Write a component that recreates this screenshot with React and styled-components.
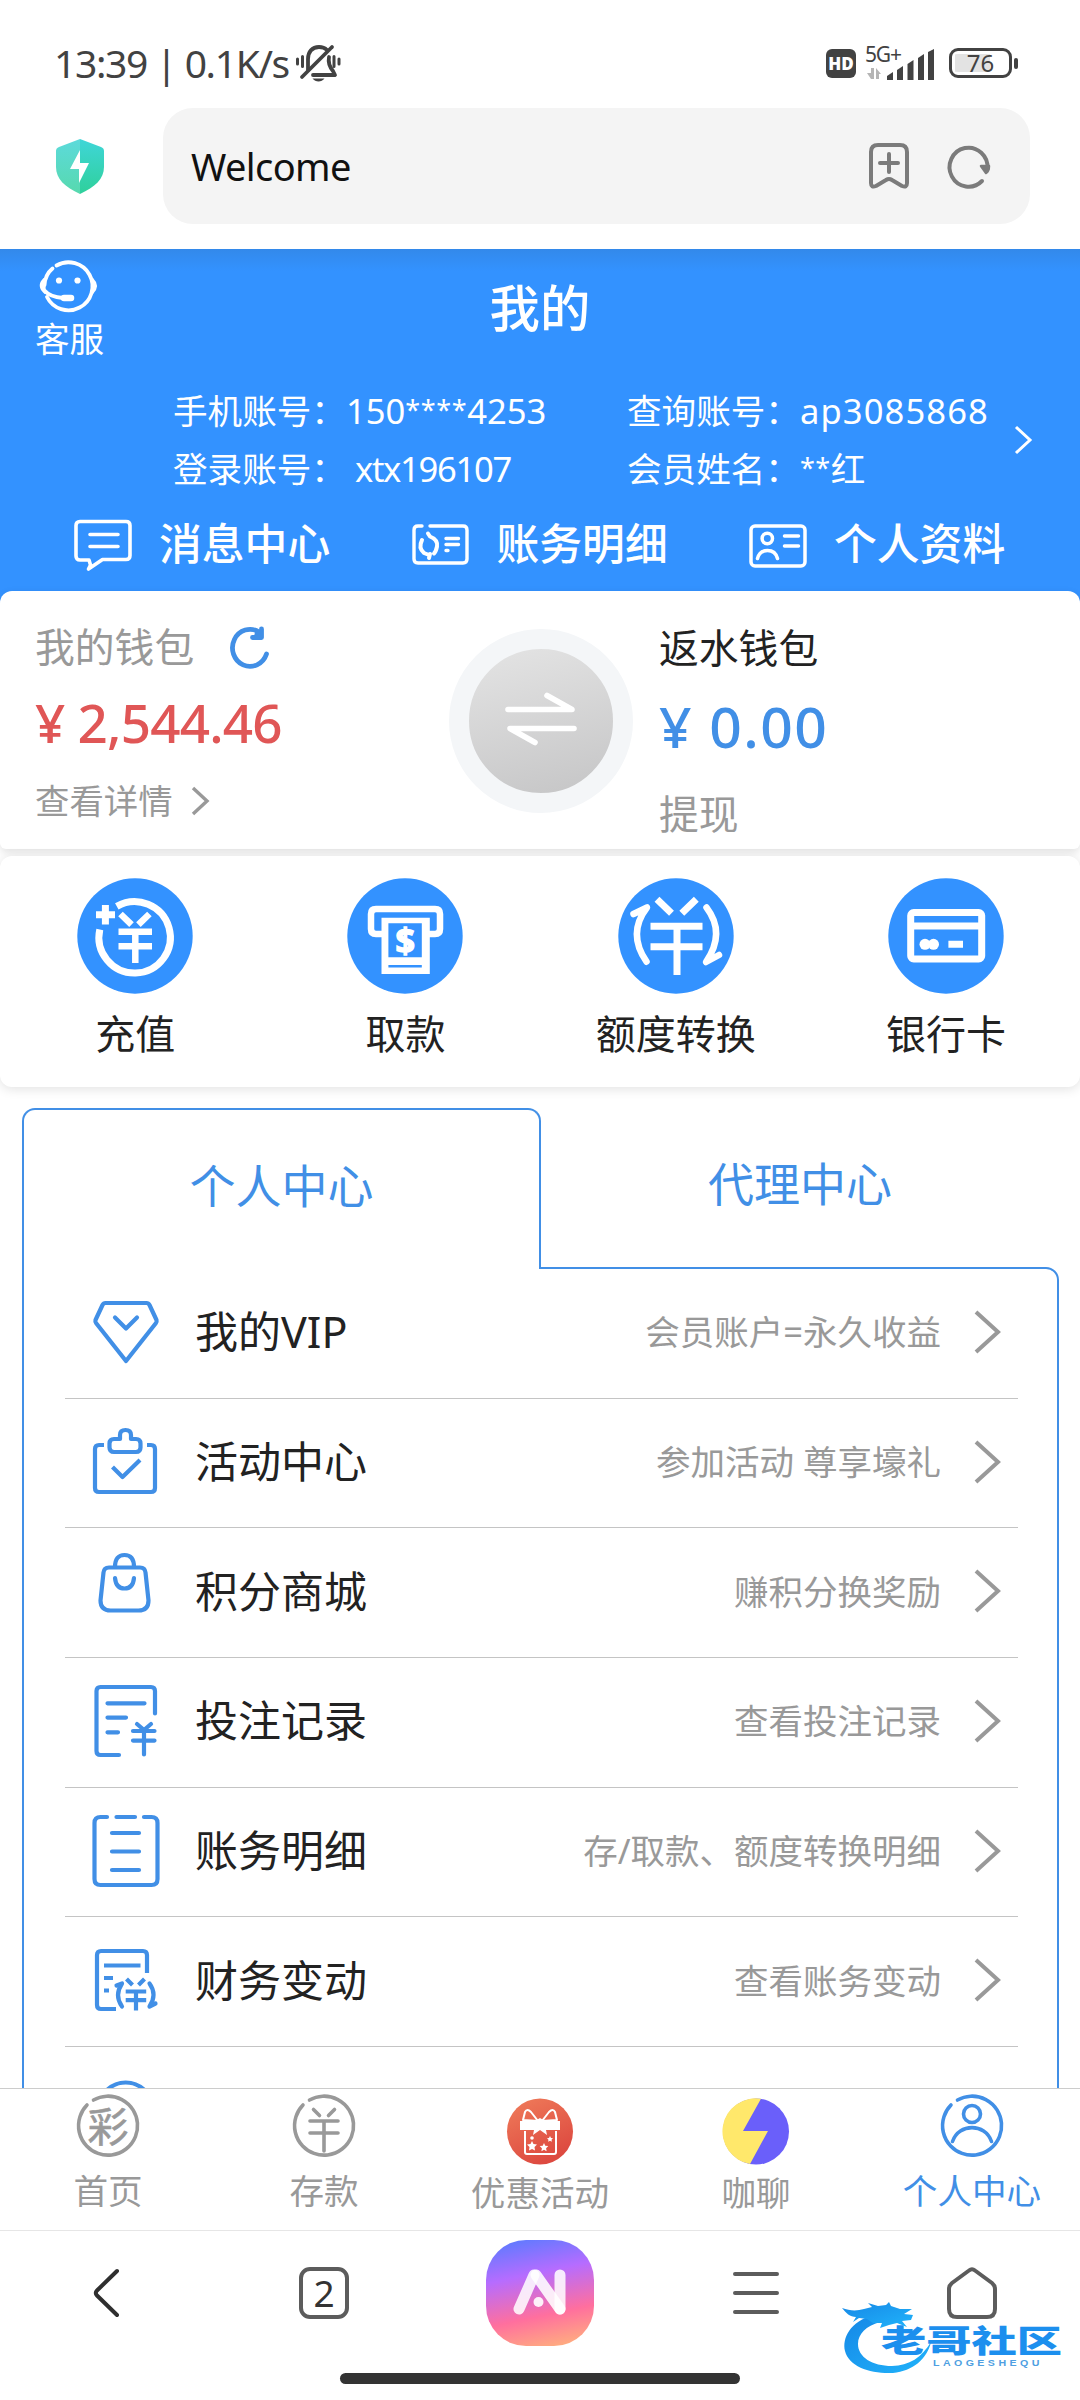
import React from 'react';
import styled, { createGlobalStyle } from 'styled-components';

const colors = {
  primary: '#3392ff',
  line: '#418fe6',
  red: '#e05656',
  text: '#222',
  muted: '#999',
  dark: '#424242',
};

const GlobalStyle = createGlobalStyle`
  * {
    box-sizing: border-box;
  }

  body {
    margin: 0;
    background: #fff;
    font-family: 'Noto Sans', 'Noto Sans CJK SC', sans-serif;
  }

  svg {
    display: block;
    flex: none;
    overflow: visible;
  }
`;

const Screen = styled.div`
  position: relative;
  display: flex;
  flex-direction: column;
  width: 1080px;
  height: 2400px;
  overflow: hidden;
  background: #fff;
  white-space: nowrap;
`;

const Text = styled.span`
  font-size: ${({ size }) => size || 34.6}px;
  line-height: ${({ height }) => height || 50}px;
  font-weight: ${({ weight }) => weight || 400};
  letter-spacing: ${({ spacing }) => spacing || 0}px;
  color: ${({ color }) => color || 'inherit'};
`;

/* ---------- system status bar ---------- */

const StatusBar = styled.div`
  display: flex;
  align-items: center;
  height: 108px;
  padding: 18px 62px 0 54px;
  color: ${colors.dark};
`;

const BellSlot = styled.div`
  margin-left: 7px;
  margin-right: auto;
`;

const HdBadge = styled.span`
  width: 30px;
  height: 29px;
  margin-right: 9px;
  border-radius: 6px;
  background: ${colors.dark};
  color: #fff;
  font-family: 'Open Sans', sans-serif;
  font-size: 17px;
  font-weight: 800;
  line-height: 29px;
  text-align: center;
`;

const Battery = styled.div`
  display: flex;
  align-items: center;
  justify-content: center;
  width: 63px;
  height: 30px;
  margin-left: 14px;
  border: 3px solid ${colors.dark};
  border-radius: 9px;
  background: linear-gradient(90deg, #fff 3px, #e3e3e3 3px 38px, #fff 38px) content-box;
  padding: 3px 0;
  font-size: 24px;
  line-height: 24px;
`;

const BatteryCap = styled.span`
  width: 4px;
  height: 11px;
  margin-left: 2px;
  border-radius: 2px;
  background: ${colors.dark};
`;

/* ---------- browser address bar ---------- */

const AddressBar = styled.div`
  display: flex;
  align-items: flex-start;
  height: 141px;
  padding: 0 50px 0 56px;
`;

const ShieldSlot = styled.div`
  width: 107px;
  padding-top: 31px;
`;

const AddressField = styled.div`
  display: flex;
  flex: 1;
  align-items: center;
  gap: 39px;
  height: 116px;
  padding: 0 40px 0 28px;
  border-radius: 30px;
  background: #f4f4f4;
  color: #111;
`;

const AddressTitle = styled(Text)`
  flex: 1;
`;

/* ---------- blue header ---------- */

const Content = styled.main`
  flex: 1;
  min-height: 0;
  overflow: hidden;
`;

const Header = styled.header`
  height: 342px;
  background: linear-gradient(#3389ea, ${colors.primary} 22px);
  color: #fff;
`;

const HeaderTop = styled.div`
  display: grid;
  grid-template-columns: 1fr auto 1fr;
  height: 132px;
  padding: 9px 35px 0;
`;

const Service = styled.div`
  display: flex;
  flex-direction: column;
`;

const PageTitle = styled.h1`
  margin: 0;
  padding-top: 20px;
  font-size: 50.4px;
  font-weight: 500;
  line-height: 60px;
`;

const Account = styled.div`
  display: flex;
  align-items: center;
  height: 116px;
  padding: 1px 0 0 173px;
`;

const AccountColumn = styled.div`
  display: flex;
  flex-direction: column;
  width: ${({ width }) => width}px;
`;

const AccountRow = styled.div`
  display: flex;
  height: 58px;
  line-height: 57px;
  font-size: 34.6px;
`;

const AccountValue = styled.span`
  padding-left: ${({ indent }) => indent || 0}px;
  letter-spacing: ${({ spacing }) => spacing || 0}px;
`;

const Mask = styled.span`
  font-size: 27px;
  letter-spacing: 0.6px;
  vertical-align: 4px;
  line-height: 1;
`;

const Shortcuts = styled.div`
  display: grid;
  grid-template-columns: repeat(3, 337.5px);
  align-items: start;
  padding: 17px 0 0 72px;
`;

const Shortcut = styled.div`
  display: flex;
  align-items: center;
  gap: 25px;
  height: 60px;
  font-size: 42.8px;
  font-weight: 500;
  line-height: 56px;

  svg {
    margin-top: 2px;
  }
`;

/* ---------- wallets ---------- */

const Wallets = styled.section`
  display: flex;
  height: 258px;
  padding: 28px 0 0 35px;
  border-radius: 12px 12px 6px 6px;
  background: #fff;
  box-shadow: 0 3px 9px rgba(0, 0, 0, 0.12);
`;

const WalletsBack = styled.div`
  background: linear-gradient(${colors.primary} 30px, #fff 30px);
`;

const Wallet = styled.div`
  display: flex;
  flex-direction: column;
  width: ${({ width }) => width}px;
`;

const WalletLine = styled.div`
  display: flex;
  flex: none;
  align-items: center;
  gap: ${({ gap }) => gap || 18}px;
  height: ${({ height }) => height}px;
`;

const SwapButton = styled.div`
  display: flex;
  align-items: center;
  justify-content: center;
  width: 184px;
  height: 184px;
  margin: 10px 26px 0 0;
  padding-bottom: 4px;
  border: 20px solid #f4f6f8;
  border-radius: 50%;
  background: linear-gradient(165deg, #e4e4e4, #c5c5c6);
`;

/* ---------- quick actions ---------- */

const Actions = styled.section`
  position: relative;
  display: grid;
  grid-template-columns: repeat(4, 270.3px);
  height: 231px;
  margin-top: 7px;
  border-radius: 12px;
  background: #fff;
  box-shadow: 0 2px 12px rgba(0, 0, 0, 0.12);
`;

const Action = styled.div`
  display: flex;
  flex-direction: column;
  align-items: center;
  padding-top: 22px;
  gap: 12px;
  color: ${colors.text};
`;

/* ---------- tabs and menu list ---------- */

const Tabs = styled.div`
  display: grid;
  grid-template-columns: 519px 518px;
  margin: 21px 0 0 22px;
`;

const Tab = styled.div`
  position: relative;
  height: ${({ $active }) => ($active ? 161 : 159)}px;
  margin-bottom: ${({ $active }) => ($active ? -2 : 0)}px;
  padding-top: 45px;
  border: ${({ $active }) => ($active ? `2px solid ${colors.line}` : 'none')};
  border-bottom: none;
  border-radius: 13px 13px 0 0;
  background: ${({ $active }) => ($active ? '#fff' : 'transparent')};
  color: ${colors.line};
  font-size: 46px;
  line-height: 61px;
  text-align: center;
`;

const Menu = styled.div`
  width: 1037px;
  height: 900px;
  margin-left: 22px;
  padding: 0 39px 0 41px;
  border: 2px solid ${colors.line};
  border-radius: 0 13px 0 0;
`;

const MenuRow = styled.div`
  display: flex;
  align-items: center;
  height: 129.7px;
  padding: 0 18px 3px 25px;
  border-bottom: 1px solid #c4c4c4;
`;

const MenuTitle = styled(Text)`
  flex: 1;
  padding: 1px 0 0 33px;
`;

const MenuHint = styled(Text)`
  margin-right: 33px;
  padding-top: 1px;
`;

/* ---------- bottom bars ---------- */

const TabBar = styled.nav`
  display: grid;
  grid-template-columns: repeat(5, 1fr);
  height: 143px;
  border-top: 1px solid #ccc;
  border-bottom: 1px solid #e6e6e6;
  background: #fff;
`;

const TabItem = styled.div`
  display: flex;
  flex-direction: column;
  align-items: center;
  padding-top: ${({ $offset }) => $offset}px;
  color: ${({ $active }) => ($active ? colors.line : colors.muted)};
`;

const BrowserBar = styled.div`
  display: grid;
  grid-template-columns: repeat(5, 1fr);
  justify-items: center;
  align-items: center;
  height: 123px;
`;

const BackButton = styled.div`
  padding-right: 4px;
`;

const PageCount = styled.div`
  width: 50px;
  height: 52px;
  border: 4px solid #5c5c5c;
  border-radius: 11px;
  color: #333;
  font-size: 37px;
  line-height: 43px;
  text-align: center;
`;

const AiButton = styled.div`
  width: 108px;
  height: 106px;
  border-radius: 40px;
  background: linear-gradient(168deg, #5b7bff 3%, #b66cff 34%, #ff6f9e 68%, #ffb47c 98%);
`;

const GestureArea = styled.div`
  display: flex;
  justify-content: center;
  height: 46px;
  padding-top: 19px;
`;

const GestureBar = styled.span`
  width: 400px;
  height: 11px;
  border-radius: 6px;
  background: #333;
`;

const Watermark = styled.div`
  position: absolute;
  left: 840px;
  top: 2298px;
  width: 226px;
  height: 80px;
  color: #1c8fee;
`;

const WatermarkName = styled.span`
  position: absolute;
  left: 41px;
  top: 28px;
  font-size: 31px;
  font-weight: 900;
  line-height: 29px;
  transform: scaleX(1.46);
  transform-origin: left center;
`;

const WatermarkLatin = styled.span`
  position: absolute;
  left: 93px;
  top: 60px;
  color: #4f9fe2;
  font-family: 'Liberation Sans', sans-serif;
  font-size: 9px;
  font-weight: 700;
  line-height: 11px;
  letter-spacing: 2.9px;
  transform: scaleX(1.18);
  transform-origin: left center;
`;

/* ---------- icons ---------- */

const Stroke = ({ w, h, width = 4, color = 'currentColor', children }) => (
  <svg
    width={w}
    height={h}
    viewBox={`0 0 ${w} ${h}`}
    fill="none"
    stroke={color}
    strokeWidth={width}
    strokeLinecap="round"
    strokeLinejoin="round"
  >
    {children}
  </svg>
);

const BellOffIcon = () => (
  <Stroke w={44} h={38} width={3.8} color={colors.dark}>
    <path d="M12 26V15C12 8 16 3 23 3c3.500 0 6 1 8 3" />
    <path d="M36 3 6 33" />
    <path d="M33 13c-1 5 0 9 4 14l2 4H17" />
    <path d="M16.500 34.500c3 4 9 4 12 0z" fill={colors.dark} stroke="none" />
    <path d="M1.500 15v5M6.500 12.500v10M38 12.500v10M43 15v5" strokeWidth="3" />
  </Stroke>
);

const SignalIcon = () => (
  <svg width="70" height="36" viewBox="0 0 70 36">
    <text x="0" y="17" fontSize="21" fill={colors.dark} textLength="37">5G+</text>
    <path d="M9 23v11H6l-4-6h4v-5zM11 23l5 6h-2v5h-3z" fill="#b5b5b5" />
    <g fill={colors.dark}>
      <path d="M22 31l6-4v8h-6zM32 25l6-4v14h-6zM42.500 19l6-4v20h-6zM53 13l6-4v26h-6zM63 7l6-3v31h-6z" />
    </g>
  </svg>
);

const ShieldIcon = () => (
  <svg width="48" height="55" viewBox="0 0 48 55">
    <defs>
      <linearGradient id="shieldRight" x1="0" y1="0" x2="0" y2="1">
        <stop offset="0" stopColor="#3fd6d8" />
        <stop offset="1" stopColor="#2fd09b" />
      </linearGradient>
      <linearGradient id="shieldLeft" x1="0" y1="0" x2="0" y2="1">
        <stop offset="0" stopColor="#5cdadb" />
        <stop offset="1" stopColor="#57d9ae" />
      </linearGradient>
    </defs>
    <path d="M24 0 3 8q-3 1-3 4v16c0 12 9 20 24 27z" fill="url(#shieldLeft)" />
    <path d="M24 0 45 8q3 1 3 4v16c0 12-9 20-24 27z" fill="url(#shieldRight)" />
    <path d="M24 11 14 30h9v14l10-20h-9z" fill="#fff" />
  </svg>
);

const BookmarkIcon = () => (
  <Stroke w={40} h={46} color="#7b7b7b">
    <path d="M2 40V9q0-7 7-7h22q7 0 7 7v31q0 5-5 3l-10-6q-3-2-6 0l-10 6q-5 2-5-3z" />
    <path d="M20 11v18M11 20h18" />
  </Stroke>
);

const ReloadIcon = () => (
  <Stroke w={42} h={43} color="#7b7b7b">
    <path d="M34 36A19 19.500 0 1 1 39.500 24" />
    <path d="M33 21h8q0 5-3 7z" fill="#7b7b7b" strokeWidth="2.500" />
  </Stroke>
);

const ServiceIcon = () => (
  <Stroke w={67} h={56} width={3.8}>
    <path d="M21.500 7.500A24 24 0 1 1 12 39M17.500 10.500C12 15 10 20 9.500 27" />
    <path d="M9 21q-7 7 1 14zM57.500 21q7 7 0 14z" fill="#fff" strokeWidth="2" />
    <path d="M10 33q5 6 18 7" />
    <path d="M29 40h7" strokeWidth="6.500" />
    <circle cx="24" cy="22.500" r="3.100" fill="#fff" stroke="none" />
    <circle cx="42.500" cy="22.500" r="3.100" fill="#fff" stroke="none" />
  </Stroke>
);

const MessageIcon = () => (
  <Stroke w={62} h={56} width={3.6}>
    <path d="M8 4.500h46q4 0 4 4v30q0 4-4 4H30.500L16.500 52l2-4-1.500-5H8q-4 0-4-4v-30.500q0-4 4-4z" />
    <path d="M18 17.500h28M18 29.500h28" />
  </Stroke>
);

const BillIcon = () => (
  <Stroke w={62} h={56} width={3.4}>
    <path d="M12 9H8q-4 0-4 4v29q0 4 4 4h45q4 0 4-4V13q0-4-4-4H20" />
    <path d="M12 23q-4 8 2 13l5 2M19 41l1-4M18 16.500l2 3q8 3 7 10-1 5-3 7" strokeWidth="4" />
    <path d="M36 21.500h12.500M36 27.500h12.500M36 33.500h2" />
  </Stroke>
);

const ProfileIcon = () => (
  <Stroke w={62} h={56} width={3.5}>
    <rect x="4" y="9" width="54" height="40" rx="4" />
    <circle cx="20.300" cy="21.500" r="5.200" />
    <path d="M10.500 41.500q2-8 10-8t10 8M37.500 19h14M37.500 29h14" />
  </Stroke>
);

const Arrow = ({ w = 18, h = 30, width = 3, color = '#fff' }) => (
  <Stroke w={w} h={h} width={width} color={color}>
    <path d={`M2 2 ${w - 2} ${h / 2} 2 ${h - 2}`} strokeLinecap="butt" strokeLinejoin="miter" />
  </Stroke>
);

const RefreshIcon = () => (
  <Stroke w={40} h={44} width={4.8} color={colors.line}>
    <path d="M36.500 29A17.500 18.500 0 1 1 29 7" />
    <path d="M31.500 4v8.500h-9" />
    <path d="M26 7l6 0v5h-7z" fill={colors.line} strokeWidth="2" />
  </Stroke>
);

const SwapIcon = () => (
  <Stroke w={72} h={56} width={5.6} color="#fff">
    <path d="M3 18.500h64L42 4.500M69 37.500H5l25 14" />
  </Stroke>
);

const ActionCircle = ({ children }) => (
  <svg width="116" height="116" viewBox="0 0 116 116" fill="none" stroke="#fff" strokeWidth="7">
    <circle cx="58" cy="58" r="57.700" fill={colors.primary} stroke="none" />
    {children}
  </svg>
);

const RechargeIcon = () => (
  <ActionCircle>
    <path d="M39.800 28.400A35.700 35.700 0 1 1 22.800 51.500" />
    <path d="M28.400 27v19.500M19 36.700h19" />
    <path d="M43.500 36l11 10.700M72.400 36l-11 10.700M41.500 53.700H75M41.500 68.300H75M58.300 53v32" strokeWidth="6.500" />
  </ActionCircle>
);

const WithdrawIcon = () => (
  <ActionCircle>
    <path d="M36 56h-7q-5 0-5-5V36q0-5 5-5h59q5 0 5 5v15q0 5-5 5h-7" strokeWidth="6.500" />
    <path d="M34.500 39.700h48.300V96H34.500z" fill="#fff" stroke="none" />
    <path d="M41.400 45.300h33.400v34H41.400zM41.400 87h33.400v2.400H41.400z" fill={colors.primary} stroke="none" />
    <text x="58.300" y="74.500" fill="#fff" stroke="#fff" strokeWidth="1.500" fontSize="34" fontWeight="700" textAnchor="middle">$</text>
  </ActionCircle>
);

const ConvertIcon = () => (
  <ActionCircle>
    <path d="M39 21.300l14.500 14M78.300 21.300l-14.500 14M32.500 48.300h52M32.500 68.700h52M59 48v49" />
    <path
      d="M15.500 36l13.500-6.500q-20 26-.5 54.200M101 77l-13 7q20-29 .5-54.500"
      strokeWidth="6.500"
      strokeLinecap="round"
      strokeLinejoin="round"
    />
  </ActionCircle>
);

const BankCardIcon = () => (
  <ActionCircle>
    <rect x="22.700" y="34.500" width="71" height="46.500" rx="3" />
    <path d="M23 48h70M60.400 66.300H75" />
    <g fill="#fff" stroke="none">
      <circle cx="37" cy="66.300" r="5.500" />
      <circle cx="45.500" cy="66.300" r="5.500" />
    </g>
  </ActionCircle>
);

const MenuIcon = ({ children }) => (
  <Stroke w={72} h={76} width={4.2} color={colors.line}>
    {children}
  </Stroke>
);

const menu = [
  {
    title: '我的VIP',
    hint: '会员账户=永久收益',
    icon: (
      <MenuIcon>
        <path d="M15.500 9h41q2 0 3 2l7 15q.5 2-.5 3L36 67 6 29q-1-1-.5-3l7-15q1-2 3-2z" />
        <path d="M25 23.500l11 11 11-11" />
      </MenuIcon>
    ),
  },
  {
    title: '活动中心',
    hint: '参加活动 尊享壕礼',
    icon: (
      <MenuIcon>
        <path d="M14 21H9q-4 0-4 4v39q0 4 4 4h52q4 0 4-4V25q0-4-4-4h-4" strokeLinecap="butt" />
        <path d="M30 15v-4q0-5 5.500-5t5.500 5v4h5q4.500 0 4.500 4.500v4q0 4.500-4.500 4.500H24q-4.500 0-4.500-4.500v-4q0-4.500 4.500-4.500z" />
        <path d="M22.500 43l10 10L50 36" strokeLinecap="butt" />
      </MenuIcon>
    ),
  },
  {
    title: '积分商城',
    hint: '赚积分换奖励',
    icon: (
      <MenuIcon>
        <path d="M19 14.500h31q5 0 5.500 5l3 28q0 10-10 10h-28q-10 0-10-10l3-28q.5-5 5.500-5z" />
        <path d="M25 14q0-12 9.500-12T44 14M25 25q1 10.500 9.500 10.500T44 25" />
      </MenuIcon>
    ),
  },
  {
    title: '投注记录',
    hint: '查看投注记录',
    icon: (
      <MenuIcon>
        <path d="M65 30.500V8q0-4-4-4H10.500q-4 0-4 4v60q0 4 4 4H29" />
        <path d="M17.500 20.300h37M17.500 34.600h18.500M17.500 49.300H28" />
        <path d="M47 41l7 6 7-6M43 48h21.500M43 57.600h21.500M54 48v23.500" />
      </MenuIcon>
    ),
  },
  {
    title: '账务明细',
    hint: '存/取款、额度转换明细',
    icon: (
      <MenuIcon>
        <path d="M17 4h-6.500q-6 0-6 6v56q0 6 6 6h51q6 0 6-6V10q0-6-6-6H54M26.500 4H45" />
        <path d="M22 20h27M22 38.500h27M22 57h27" />
      </MenuIcon>
    ),
  },
  {
    title: '财务变动',
    hint: '查看账务变动',
    icon: (
      <MenuIcon>
        <path d="M57 31V13q0-4-4-4H11q-4 0-4 4v50q0 4 4 4h15" strokeLinecap="butt" />
        <path d="M14 23.500h36.500M14 36h9M14 48.500h5" strokeLinecap="butt" />
        <path d="M36.500 37l6 6M54.500 37l-6 6M35.700 49.500h20.500M35.700 58.200h20.500M46 49.500v19" strokeLinecap="butt" />
        <path d="M26.500 43.500l5.500-2q-8 12 0 23M65.500 61.500l-6 3q8-12 0-23" />
      </MenuIcon>
    ),
  },
  {
    title: '',
    hint: '',
    icon: (
      <MenuIcon>
        <circle cx="35.700" cy="37.500" r="27" />
      </MenuIcon>
    ),
  },
];

const OpenRing = () => <path d="M17.500 6A29.500 29.500 0 1 1 11 11" />;

const HomeTabIcon = () => (
  <Stroke w={64} h={64} width={3.6}>
    <OpenRing />
    <text x="32" y="47.500" fontSize="41" fill="currentColor" stroke="currentColor" strokeWidth="0.600" textAnchor="middle">彩</text>
  </Stroke>
);

const DepositTabIcon = () => (
  <Stroke w={64} h={64} width={3.6}>
    <OpenRing />
    <path d="M21.500 15.500l6 6M42.500 15.500l-6 6M18 27h28M18 39h28M32 27v30" />
  </Stroke>
);

const GiftTabIcon = () => (
  <svg width="66" height="67" viewBox="0 0 66 67">
    <defs>
      <linearGradient id="gift" x1="0" y1="0" x2="0.500" y2="1">
        <stop offset="0" stopColor="#f07d5b" />
        <stop offset="1" stopColor="#dd4a40" />
      </linearGradient>
    </defs>
    <circle cx="33" cy="33.500" r="33" fill="url(#gift)" />
    <g fill="none" stroke="#fff" strokeWidth="2" strokeLinejoin="round">
      <path d="M18 33v21q0 2 2 2h27q2 0 2-2V33" />
      <path d="M31 23l-7-9q-4-4-6 0l-2 8zM35 23l7-9q4-4 6 0l2 8z" />
    </g>
    <path d="M13 23h15l5-3 5 3h15v9H39l1 5-7-5-7 5 1-5H13z" fill="#fff" />
    <path d="M25 43l1.500 3 3.500.5-2.500 2.500.5 3.500-3-1.500-3 1.500.5-3.500-2.500-2.500 3.500-.5z" fill="#fff" />
    <path d="M37 45l1.300 2.700 3 .4-2.200 2.100.5 3-2.600-1.400-2.600 1.400.5-3-2.200-2.100 3-.4z" fill="#fff" />
    <path d="M43 38l1 2 2 .3-1.500 1.500.4 2-1.900-1-1.900 1 .4-2-1.500-1.500 2-.3z" fill="#fff" />
    <circle cx="25" cy="40" r="1.800" fill="#fff" />
  </svg>
);

const ChatTabIcon = () => (
  <svg width="66" height="67" viewBox="0 0 66 67">
    <circle cx="33" cy="33.500" r="33" fill="#6a5ffa" />
    <path d="M38 .8A33 33 0 1 0 27 66L45 33H20z" fill="#ffe86b" />
  </svg>
);

const UserTabIcon = () => (
  <Stroke w={64} h={64} width={3.6}>
    <OpenRing />
    <circle cx="32" cy="20" r="8.500" />
    <path d="M12.500 47.500C19 29 45 29 51.500 47.500" />
  </Stroke>
);

const BackIcon = () => (
  <Stroke w={26} h={48} width={4} color="#2f2f2f">
    <path d="M24 2 4 21.500q-2.500 2.500 0 5L24 46" />
  </Stroke>
);

const AiIcon = () => (
  <svg width="108" height="106" viewBox="0 0 108 106" fill="none" strokeLinecap="round">
    <path d="M50 35l24 34" stroke="#fff" strokeOpacity="0.880" strokeWidth="11" />
    <path d="M33 69l15-34M74 69V35" stroke="#fff" strokeOpacity="0.860" strokeWidth="11" />
    <circle cx="52.500" cy="62" r="5" fill="#fff" fillOpacity="0.900" />
  </svg>
);

const HamburgerIcon = () => (
  <Stroke w={46} h={44} color="#5c5c5c">
    <path d="M2 3h42M2 22h42M2 41h42" />
  </Stroke>
);

const HouseIcon = () => (
  <Stroke w={50} h={52} color="#5c5c5c">
    <path d="M22 3.500q3-2.500 6 0l17 12.500q3 2.500 3 6v20q0 8-8 8H10q-8 0-8-8V22q0-3.500 3-6z" />
  </Stroke>
);

const DragonIcon = () => (
  <svg width="100" height="80" viewBox="0 0 100 80">
    <defs>
      <linearGradient id="dragon" x1="0" y1="0" x2="1" y2="1">
        <stop offset="0" stopColor="#1687e6" />
        <stop offset="1" stopColor="#20b4fb" />
      </linearGradient>
    </defs>
    <g fill="url(#dragon)">
      <path d="M33 17C10 24 2 40 5 53c4 16 26 23 48 22 20-2 34-14 38-31-9 15-22 24-39 24-20 0-34-9-34-22 0-10 8-18 22-22z" />
      <path d="M2 10c8 3 15 3 22 1l8-2-4-4 10 3 8-1 3-3 2 4 9 3 12 0-8 5 9 1-2 5-9 1 5 6-10-4-8 2-9 3 2-5-9 0-6-4-8-1-6 4 3-5c-6 0-10-4-14-9z" />
    </g>
  </svg>
);

const shortcuts = [
  { label: '消息中心', icon: <MessageIcon /> },
  { label: '账务明细', icon: <BillIcon /> },
  { label: '个人资料', icon: <ProfileIcon /> },
];

const actions = [
  { label: '充值', icon: <RechargeIcon /> },
  { label: '取款', icon: <WithdrawIcon /> },
  { label: '额度转换', icon: <ConvertIcon /> },
  { label: '银行卡', icon: <BankCardIcon /> },
];

const tabItems = [
  { label: '首页', icon: <HomeTabIcon />, offset: 5 },
  { label: '存款', icon: <DepositTabIcon />, offset: 5 },
  { label: '优惠活动', icon: <GiftTabIcon />, offset: 9, tight: true },
  { label: '咖聊', icon: <ChatTabIcon />, offset: 9, tight: true },
  { label: '个人中心', icon: <UserTabIcon />, offset: 5, active: true },
];

export default function App() {
  return (
    <Screen>
      <GlobalStyle />

      <StatusBar>
        <Text size={39} spacing={-1.35}>13:39 | 0.1K/s</Text>
        <BellSlot>
          <BellOffIcon />
        </BellSlot>
        <HdBadge>HD</HdBadge>
        <SignalIcon />
        <Battery>76</Battery>
        <BatteryCap />
      </StatusBar>

      <AddressBar>
        <ShieldSlot>
          <ShieldIcon />
        </ShieldSlot>
        <AddressField>
          <AddressTitle size={38} spacing={-0.6}>Welcome</AddressTitle>
          <BookmarkIcon />
          <ReloadIcon />
        </AddressField>
      </AddressBar>

      <Content>
        <Header>
          <HeaderTop>
            <Service>
              <ServiceIcon />
              <Text height={50}>客服</Text>
            </Service>
            <PageTitle>我的</PageTitle>
          </HeaderTop>
          <Account>
            <AccountColumn width={454}>
              <AccountRow>
                手机账号：
                <AccountValue>150<Mask>****</Mask>4253</AccountValue>
              </AccountRow>
              <AccountRow>
                登录账号：
                <AccountValue indent={9} spacing={-1.3}>xtx196107</AccountValue>
              </AccountRow>
            </AccountColumn>
            <AccountColumn width={387}>
              <AccountRow>
                查询账号：
                <AccountValue spacing={1.1}>ap3085868</AccountValue>
              </AccountRow>
              <AccountRow>
                会员姓名：
                <AccountValue><Mask>**</Mask>红</AccountValue>
              </AccountRow>
            </AccountColumn>
            <Arrow />
          </Account>
          <Shortcuts>
            {shortcuts.map(({ label, icon }) => (
              <Shortcut key={label}>
                {icon}
                {label}
              </Shortcut>
            ))}
          </Shortcuts>
        </Header>

        <WalletsBack>
          <Wallets>
            <Wallet width={414}>
              <WalletLine height={56} gap={36}>
                <Text size={39.8} color={colors.muted}>我的钱包</Text>
                <RefreshIcon />
              </WalletLine>
              <WalletLine height={96}>
                <Text size={53} weight={500} spacing={-0.8} color={colors.red}>¥ 2,544.46</Text>
              </WalletLine>
              <WalletLine height={59}>
                <Text size={34.4} color={colors.muted}>查看详情</Text>
                <Arrow width={3.4} color={colors.muted} />
              </WalletLine>
            </Wallet>
            <SwapButton>
              <SwapIcon />
            </SwapButton>
            <Wallet width={400}>
              <WalletLine height={57}>
                <Text size={39.8} color={colors.text}>返水钱包</Text>
              </WalletLine>
              <WalletLine height={100}>
                <Text size={57} weight={500} spacing={1.4} color={colors.line}>¥ 0.00</Text>
              </WalletLine>
              <WalletLine height={76}>
                <Text size={39.8} color={colors.muted}>提现</Text>
              </WalletLine>
            </Wallet>
          </Wallets>
        </WalletsBack>

        <Actions>
          {actions.map(({ label, icon }) => (
            <Action key={label}>
              {icon}
              <Text size={40} height={56}>{label}</Text>
            </Action>
          ))}
        </Actions>

        <Tabs>
          <Tab $active>个人中心</Tab>
          <Tab>代理中心</Tab>
        </Tabs>
        <Menu>
          {menu.map(({ title, hint, icon }) => (
            <MenuRow key={title}>
              {icon}
              <MenuTitle size={43} height={60} color={colors.text}>{title}</MenuTitle>
              <MenuHint size={34.5} color={colors.muted}>{hint}</MenuHint>
              <Arrow w={26} h={44} width={4} color={colors.muted} />
            </MenuRow>
          ))}
        </Menu>
      </Content>

      <TabBar>
        {tabItems.map(({ label, icon, offset, tight, active }) => (
          <TabItem key={label} $offset={offset} $active={active}>
            {icon}
            <Text height={tight ? 56 : 66}>{label}</Text>
          </TabItem>
        ))}
      </TabBar>

      <BrowserBar>
        <BackButton>
          <BackIcon />
        </BackButton>
        <PageCount>2</PageCount>
        <AiButton>
          <AiIcon />
        </AiButton>
        <HamburgerIcon />
        <HouseIcon />
      </BrowserBar>
      <GestureArea>
        <GestureBar />
      </GestureArea>

      <Watermark>
        <DragonIcon />
        <WatermarkName>老哥社区</WatermarkName>
        <WatermarkLatin>LAOGESHEQU</WatermarkLatin>
      </Watermark>
    </Screen>
  );
}
